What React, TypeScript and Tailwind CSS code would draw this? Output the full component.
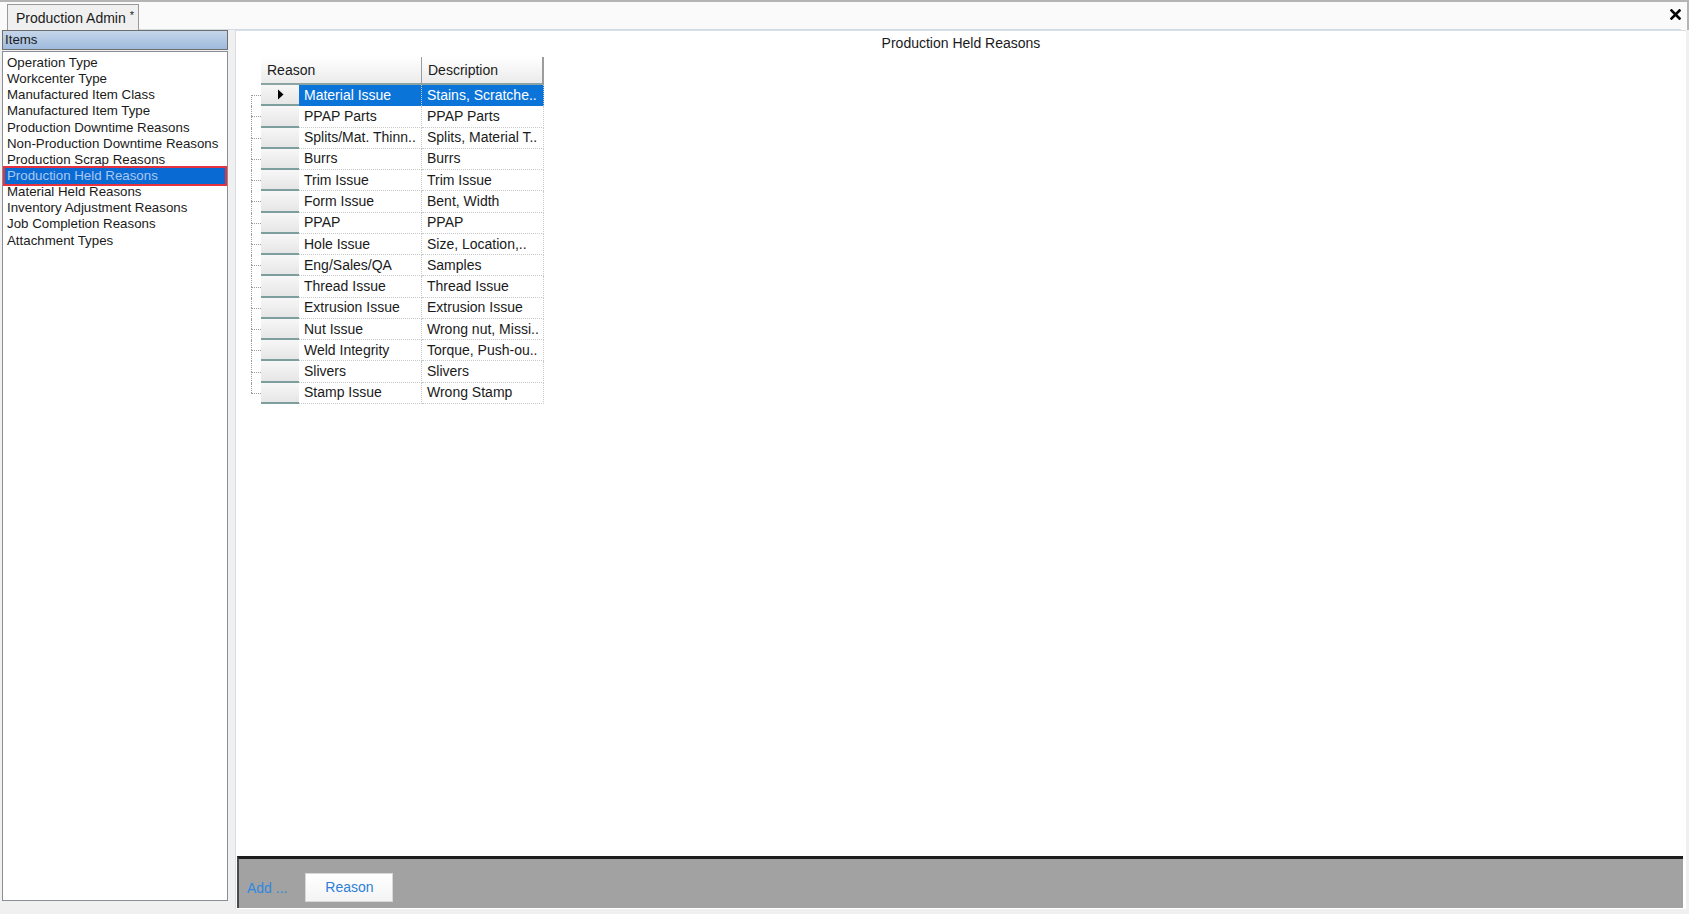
import React from "react";

const listItems = [
  "Operation Type",
  "Workcenter Type",
  "Manufactured Item Class",
  "Manufactured Item Type",
  "Production Downtime Reasons",
  "Non-Production Downtime Reasons",
  "Production Scrap Reasons",
  "Production Held Reasons",
  "Material Held Reasons",
  "Inventory Adjustment Reasons",
  "Job Completion Reasons",
  "Attachment Types",
];

const rows: [string, string][] = [
  ["Material Issue", "Stains, Scratche.."],
  ["PPAP Parts", "PPAP Parts"],
  ["Splits/Mat. Thinn..", "Splits, Material T.."],
  ["Burrs", "Burrs"],
  ["Trim Issue", "Trim Issue"],
  ["Form Issue", "Bent, Width"],
  ["PPAP", "PPAP"],
  ["Hole Issue", "Size, Location,.."],
  ["Eng/Sales/QA", "Samples"],
  ["Thread Issue", "Thread Issue"],
  ["Extrusion Issue", "Extrusion Issue"],
  ["Nut Issue", "Wrong nut, Missi.."],
  ["Weld Integrity", "Torque, Push-ou.."],
  ["Slivers", "Slivers"],
  ["Stamp Issue", "Wrong Stamp"],
];

export default function App() {
  return (
    <div
      className="w-[1689px] h-[914px] bg-[#f0f0f0] flex flex-col overflow-hidden text-[#1a1a1a]"
      style={{ fontFamily: '"Liberation Sans", Arial, sans-serif' }}
    >
      {/* Top tab bar */}
      <div className="h-[30px] shrink-0 flex items-end bg-[#fafafa] border-t-[2px] border-[#b4b4b4] border-r-[2px] pl-[7px] pr-[6px]">
        <div className="h-[26px] w-[132px] bg-[#f0f0f0] border border-b-0 border-[#9a9a9a] flex items-center pl-[8px] text-[14px] leading-none whitespace-nowrap">
          Production Admin <span className="text-[11px] ml-[4px] -mt-[5px]">*</span>
        </div>
        <div className="flex-1 self-stretch border-b border-[#d3dbe3]" />
        <div className="self-stretch flex items-center border-b border-[#d3dbe3] pb-[2px]">
          <svg width="11" height="11" viewBox="0 0 11 11">
            <path d="M1.5 1.5 L9.5 9.5 M9.5 1.5 L1.5 9.5" stroke="#000" strokeWidth="2.6" strokeLinecap="square" />
          </svg>
        </div>
      </div>

      {/* Body */}
      <div className="flex-1 flex gap-[7px] pb-[5px] pr-[3px] min-h-0">
        {/* Left panel */}
        <div className="w-[228px] shrink-0 pl-[2px] flex flex-col pb-[8px]">
          <div className="h-[20px] border border-[#6e6e6e] bg-gradient-to-b from-[#c6d6ea] to-[#9ebbdd] flex items-center pl-[2px] text-[13.3px] leading-none">
            Items
          </div>
          <div className="flex-1 mt-[1px] bg-white border border-[#8a8f96] pt-[3px] text-[13.3px]">
            {listItems.map((it) => {
              const sel = it === "Production Held Reasons";
              return (
                <div key={it} className="relative h-[16.15px] leading-[16.15px]">
                  <div
                    className={
                      sel
                        ? "h-full ml-[2px] pl-[2px] bg-[#0a6ad4] text-[#a9c8ef] whitespace-nowrap"
                        : "h-full pl-[4px] whitespace-nowrap"
                    }
                  >
                    {it}
                  </div>
                  {sel && (
                    <div className="absolute -top-[2px] -bottom-[2px] left-0 right-[0px] border-2 border-[#e5323f] pointer-events-none" />
                  )}
                </div>
              );
            })}
          </div>
        </div>

        {/* Right panel */}
        <div className="flex-1 flex flex-col bg-white border-t border-l border-[#d6dee6] min-w-0">
          <div className="h-[21px] pt-[4px] text-center text-[14px] leading-[17px]">Production Held Reasons</div>
          <div className="mt-[5px] ml-[15px] flex flex-col text-[14px]">
            {/* header */}
            <div className="flex ml-[10px]">
              <div className="w-[161px] h-[28px] bg-gradient-to-b from-[#ffffff] to-[#ebebeb] border-b-2 border-[#8aa3a3] border-r border-r-[#9c9c9c] flex items-center pl-[6px]">
                Reason
              </div>
              <div className="w-[122px] h-[28px] bg-gradient-to-b from-[#ffffff] to-[#ebebeb] border-b-2 border-[#8aa3a3] border-r-2 border-r-[#9c9c9c] flex items-center pl-[6px]">
                Description
              </div>
            </div>
            {rows.map(([r, d], i) => {
              const sel = i === 0;
              const last = i === rows.length - 1;
              return (
                <div key={i} className="flex h-[21.27px]">
                  <div className="w-[10px] flex flex-col">
                    <div className={i === 0 ? "flex-1" : "flex-1 border-l border-dotted border-[#9a9a9a]"} />
                    <div
                      className={
                        last
                          ? "flex-1 border-t border-dotted border-[#9a9a9a]"
                          : "flex-1 border-t border-l border-dotted border-[#9a9a9a]"
                      }
                    />
                  </div>
                  <div className="w-[38px] bg-gradient-to-b from-[#f7f7f7] to-[#e6e6e6] border-b-2 border-[#7e9e9e] flex items-center justify-center">
                    {sel && (
                      <svg width="7" height="11" viewBox="0 0 7 11">
                        <path d="M1 0.5 L6.5 5.5 L1 10.5 Z" fill="#000" />
                      </svg>
                    )}
                  </div>
                  <div
                    className={
                      sel
                        ? "w-[123px] bg-[#0b74d9] text-white border-r border-dotted border-[#c9c9c9] pl-[5px] flex items-center whitespace-nowrap overflow-hidden"
                        : "w-[123px] border-r border-b border-dotted border-[#c9c9c9] pl-[5px] flex items-center whitespace-nowrap overflow-hidden"
                    }
                  >
                    {r}
                  </div>
                  <div
                    className={
                      sel
                        ? "w-[122px] bg-[#0b74d9] text-white border-r border-dotted border-[#c9c9c9] pl-[5px] flex items-center whitespace-nowrap overflow-hidden"
                        : "w-[122px] border-r border-b border-dotted border-[#c9c9c9] pl-[5px] flex items-center whitespace-nowrap overflow-hidden"
                    }
                  >
                    {d}
                  </div>
                </div>
              );
            })}
          </div>
          <div className="flex-1" />
          {/* bottom bar */}
          <div className="h-[52px] ml-[1px] mr-[3px] mb-[1px] bg-[#a2a2a2] border-t-[3px] border-t-[#1c1c1c] border-l-2 border-l-[#4a4a4a] flex items-end pb-[6px] pl-[8px] text-[14px]">
            <span className="text-[#2d88e0] mb-[3px]">Add ...</span>
            <div className="ml-[18px] w-[88px] h-[29px] bg-gradient-to-b from-white to-[#f4f4f4] border border-[#d8d8d8] flex items-center justify-center text-[#2d7fd6]">
              Reason
            </div>
          </div>
        </div>
      </div>
    </div>
  );
}
